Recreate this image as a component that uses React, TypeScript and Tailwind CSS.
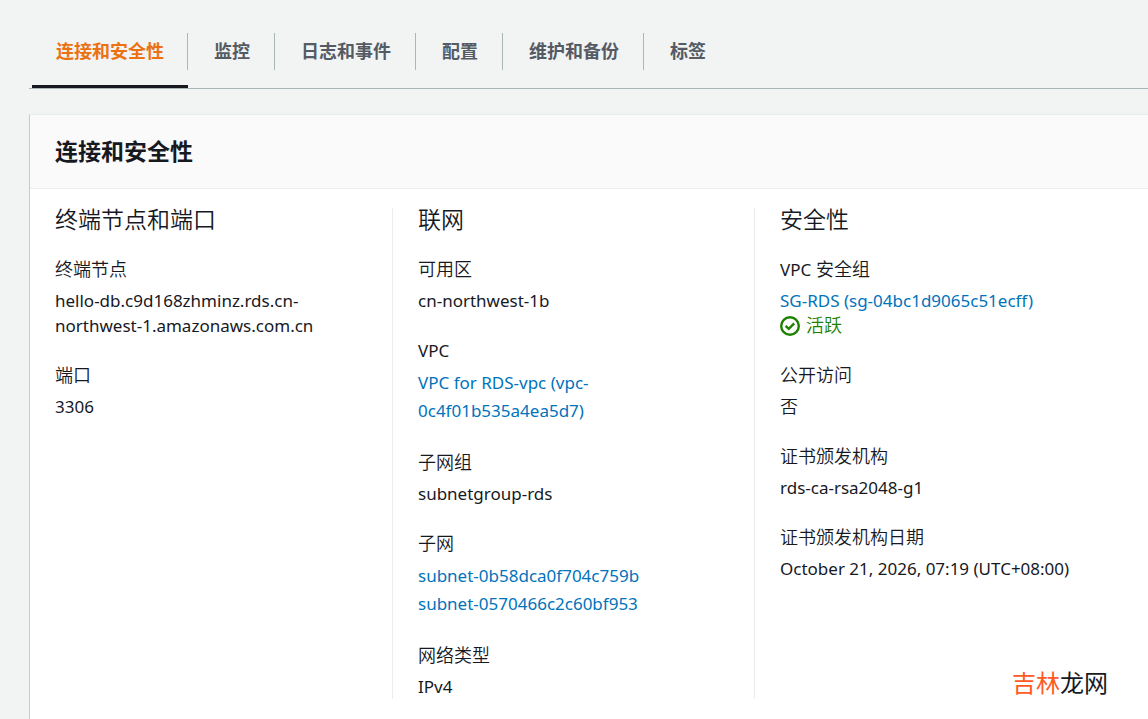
import { useState } from "react";
import type { ReactNode } from "react";

const tabs = ["连接和安全性", "监控", "日志和事件", "配置", "维护和备份", "标签"];

function Column({ title, children }: { title: string; children: ReactNode }) {
  return (
    <section className="border-l border-[#eaeded] pr-6 pl-[25px] first:border-l-0">
      <h3 className="text-[23px] leading-[23px] font-[350]">{title}</h3>
      <dl className="mt-[26px] flex flex-col gap-[25px]">{children}</dl>
    </section>
  );
}

function Field({ label, children }: { label: ReactNode; children: ReactNode }) {
  return (
    <div className="flex flex-col gap-[6px]">
      <dt className="text-[18px] font-[350]">{label}</dt>
      <dd className="wrap-anywhere">{children}</dd>
    </div>
  );
}

function Link({ children }: { children: ReactNode }) {
  return (
    <a href="#" className="text-[#0073bb] hover:underline">
      {children}
    </a>
  );
}

function StatusIcon() {
  return (
    <svg viewBox="0 0 20 20" className="size-5 shrink-0" fill="none" stroke="currentColor" aria-hidden="true">
      <circle cx="10" cy="10" r="8.8" strokeWidth="2.4" />
      <path d="M5.6 9.8 8.8 12.8 14.2 7.4" strokeWidth="2.4" />
    </svg>
  );
}

export default function App() {
  const [active, setActive] = useState(0);

  return (
    <main className="relative min-h-screen bg-[#f2f3f3] pt-[18px] pl-[29px] font-['Noto_Sans','Noto_Sans_CJK_SC',sans-serif] text-[17px] leading-[25px] text-[#16191f]">
      <div role="tablist" className="flex border-b border-[#aab7b8] pl-[3px]">
        {tabs.map((tab, i) => (
          <button
            key={tab}
            type="button"
            role="tab"
            aria-selected={active === i}
            onClick={() => setActive(i)}
            className={
              "group flex flex-col border-b-[3px] pt-[15px] text-[18px] font-bold whitespace-nowrap " +
              (active === i ? "border-[#16191f] text-[#ec7211]" : "border-transparent text-[#545b64]")
            }
          >
            <span className="mb-[15px] border-r border-[#aab7b8] py-[6px] pr-6 pl-[26px] group-first:pr-[23px] group-first:pl-6 group-last:border-r-0">
              {tab}
            </span>
          </button>
        ))}
      </div>

      <div className="mt-[25px] border-t border-l border-t-[#eaeded] border-l-[#c5cbcb] bg-white">
        <header className="border-b border-[#eaeded] bg-[#fafafa] px-[25px] py-6">
          <h2 className="text-[23px] leading-[25px] font-bold">连接和安全性</h2>
        </header>

        <div className="grid grid-cols-3 pt-[19px] pr-8 pb-5">
          <Column title="终端节点和端口">
            <Field label="终端节点">hello-db.c9d168zhminz.rds.cn-northwest-1.amazonaws.com.cn</Field>
            <Field label="端口">3306</Field>
          </Column>

          <Column title="联网">
            <Field label="可用区">cn-northwest-1b</Field>
            <Field label={<span className="text-[17px] font-normal">VPC</span>}>
              <div className="max-w-[200px] leading-7">
                <Link>VPC for RDS-vpc (vpc-0c4f01b535a4ea5d7)</Link>
              </div>
            </Field>
            <Field label="子网组">subnetgroup-rds</Field>
            <Field label="子网">
              <div className="flex flex-col items-start leading-7">
                <Link>subnet-0b58dca0f704c759b</Link>
                <Link>subnet-0570466c2c60bf953</Link>
              </div>
            </Field>
            <Field label="网络类型">IPv4</Field>
          </Column>

          <Column title="安全性">
            <Field
              label={
                <>
                  <span className="text-[17px] font-normal">VPC</span> 安全组
                </>
              }
            >
              <Link>SG-RDS (sg-04bc1d9065c51ecff)</Link>
              <div className="flex items-center gap-[6px] text-[18px] font-[350] text-[#1d8102]">
                <StatusIcon />
                活跃
              </div>
            </Field>
            <Field label="公开访问">
              <span className="text-[18px] font-[350]">否</span>
            </Field>
            <Field label="证书颁发机构">rds-ca-rsa2048-g1</Field>
            <Field label="证书颁发机构日期">October 21, 2026, 07:19 (UTC+08:00)</Field>
          </Column>
        </div>
      </div>

      <div className="absolute right-10 bottom-[22px] text-[24px] leading-7">
        <span className="text-[#ff5a1f]">吉林</span>龙网
      </div>
    </main>
  );
}
